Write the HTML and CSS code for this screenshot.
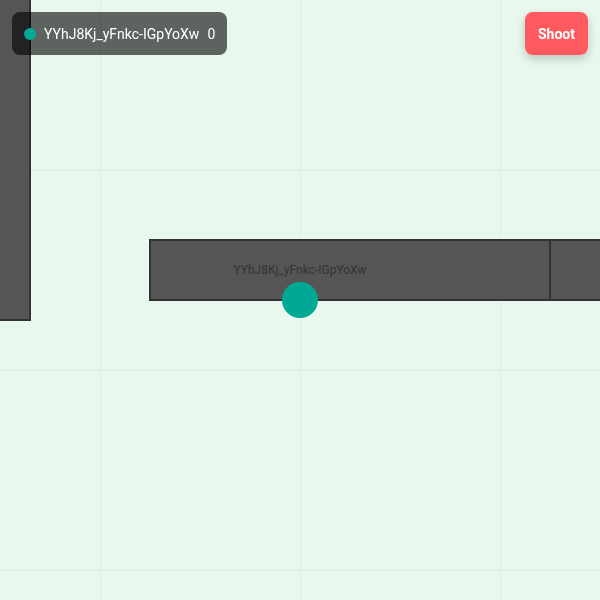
FILE: index.html
```html
<!DOCTYPE html>
<html lang="en">
<head>
  <meta charset="UTF-8">
  <title>Arena</title>
  <link rel="stylesheet" href="styles.css">
</head>
<body>
  <div id="world">
    <!-- walls, in world coordinates -->
    <div class="wall" style="left:-40px; top:-80px; width:71px; height:401px;"></div>
    <div class="wall" style="left:149px; top:239px; width:402px; height:62px;"></div>
    <div class="wall" style="left:549px; top:239px; width:120px; height:62px;"></div>

    <div class="player" style="left:300px; top:300px;">
      <span class="player-name">YYhJ8Kj_yFnkc-IGpYoXw</span>
    </div>
  </div>

  <div class="hud">
    <div class="scores">
      <span class="dot"></span>
      <span class="name">YYhJ8Kj_yFnkc-IGpYoXw</span>
      <span class="score">0</span>
    </div>
    <button class="shoot">Shoot</button>
  </div>
</body>
</html>
```

FILE: styles.css
```css
html, body {
  margin: 0;
  padding: 0;
  height: 100%;
  overflow: hidden;
  font-family: Roboto, "Liberation Sans", sans-serif;
}

#world {
  position: relative;
  width: 100%;
  height: 100%;
  background-color: #e8f8ee;
  background-image:
    linear-gradient(to right, #dbeee2 1px, transparent 1px),
    linear-gradient(to bottom, #dbeee2 1px, transparent 1px);
  background-size: 200px 200px;
  background-position: 100px 170px;
  overflow: hidden;
}

.wall {
  position: absolute;
  box-sizing: border-box;
  background: #555;
  border: 2px solid #333;
}

.player {
  position: absolute;
  width: 36px;
  height: 36px;
  margin: -18px 0 0 -18px;
  border-radius: 50%;
  background: #00a896;
}

.player-name {
  position: absolute;
  left: 50%;
  bottom: 100%;
  transform: translateX(-50%);
  margin-bottom: 5px;
  white-space: nowrap;
  font-size: 12px;
  color: #333;
}

.hud {
  position: fixed;
  top: 12px;
  left: 12px;
  right: 12px;
  display: flex;
  justify-content: space-between;
  align-items: flex-start;
}

.scores {
  display: flex;
  align-items: center;
  gap: 8px;
  height: 43px;
  box-sizing: border-box;
  padding: 0 12px;
  background: rgba(0, 0, 0, 0.6);
  border-radius: 8px;
  color: #fff;
  font-size: 14px;
}

.dot {
  width: 12px;
  height: 12px;
  border-radius: 50%;
  background: #00a896;
}

.shoot {
  height: 43px;
  padding: 0 13px;
  border: none;
  border-radius: 8px;
  background: #ff5a5f;
  color: #fff;
  font-family: inherit;
  font-weight: bold;
  font-size: 14px;
  box-shadow: 0 4px 10px rgba(0, 0, 0, 0.2);
  cursor: pointer;
}
```
